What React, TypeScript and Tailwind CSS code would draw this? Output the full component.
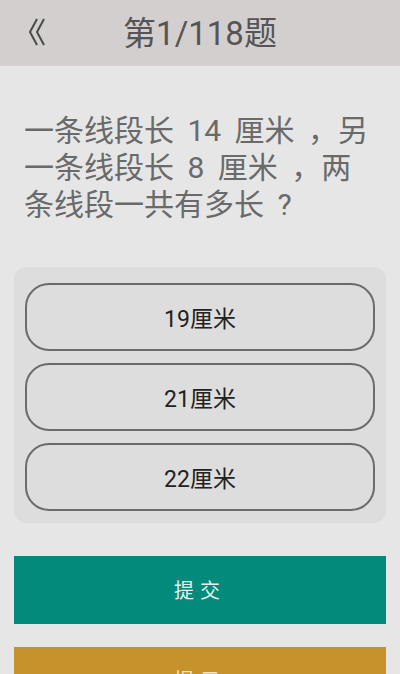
import React from "react";

const options = ["19厘米", "21厘米", "22厘米"];

const BackIcon = () => (
  <svg width="18" height="30" viewBox="0 0 18 30" fill="none" stroke="#4a4a4a" strokeWidth="2">
    <path d="M9 2 L2 15 L9 28" />
    <path d="M16 2 L9 15 L16 28" />
  </svg>
);

export default function App() {
  return (
    <div
      className="w-[400px] h-[674px] overflow-hidden bg-[#e6e6e6] flex flex-col"
      style={{ fontFamily: '"Roboto", "Noto Sans CJK SC", sans-serif' }}
    >
      <header className="relative h-[66px] shrink-0 bg-[#d2cfce] flex items-center justify-center">
        <div className="absolute left-[28px] top-[17px]">
          <BackIcon />
        </div>
        <h1 className="text-[33px] text-[#555555] leading-none">第1/118题</h1>
      </header>

      <div className="pt-[46px] px-[24px] text-[30px] leading-[37px] text-[#6a6a6a] [word-spacing:6px]">
        <p className="whitespace-nowrap">一条线段长 14 厘米 ，另</p>
        <p className="whitespace-nowrap">一条线段长 8 厘米 ，两</p>
        <p className="whitespace-nowrap">条线段一共有多长 ?</p>
      </div>

      <div className="mx-[14px] mt-[44px] pt-[16px] pb-[12px] px-[11px] rounded-[12px] bg-[#dddddd] flex flex-col gap-[12px]">
        {options.map((o) => (
          <button
            key={o}
            className="h-[68px] pt-[6px] rounded-[24px] border-2 border-[#6b6b6b] flex items-center justify-center text-[23px] text-[#222222]"
          >
            {o}
          </button>
        ))}
      </div>

      <button className="mx-[14px] mt-[33px] h-[68px] shrink-0 bg-[#048a7b] text-[#e3f2ef] text-[20px] tracking-[6px] pt-[2px]">
        提交
      </button>
      <button className="mx-[14px] mt-[23px] h-[68px] shrink-0 bg-[#c6922c] text-[#f3e6c8] text-[20px] tracking-[6px]">
        提示
      </button>
    </div>
  );
}
